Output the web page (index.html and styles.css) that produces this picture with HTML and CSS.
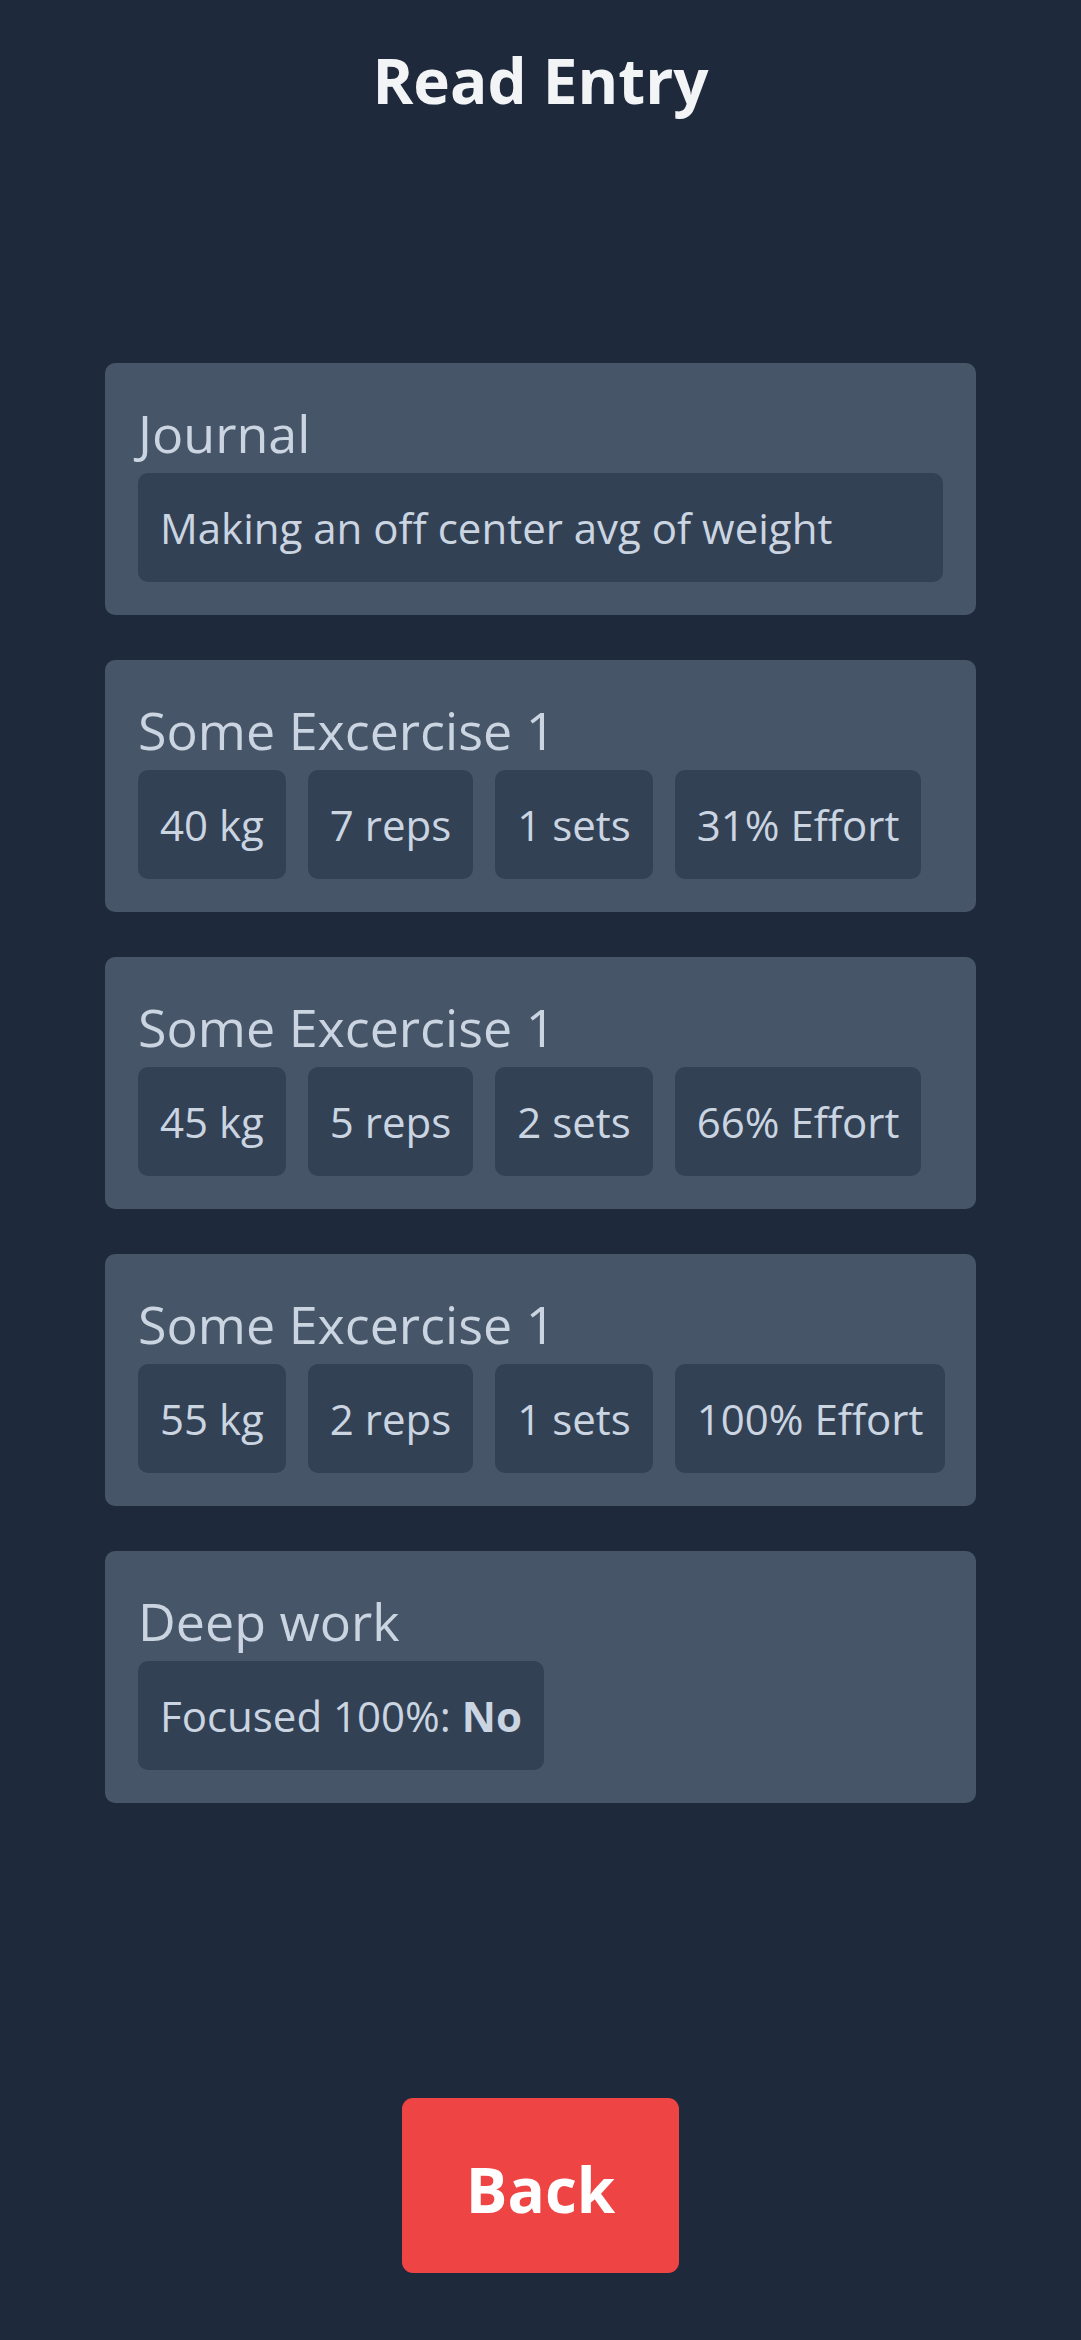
FILE: index.html
```html
<!DOCTYPE html>
<html lang="en">
<head>
<meta charset="utf-8">
<title>Read Entry</title>
<link rel="stylesheet" href="styles.css">
</head>
<body>
<div class="page">
  <h1 class="title">Read Entry</h1>
  <main class="entries">
    <section class="card">
      <div class="card-label">Journal</div>
      <div class="box">Making an off center avg of weight</div>
    </section>
    <section class="card">
      <div class="card-label">Some Excercise 1</div>
      <div class="chips">
        <span class="box">40 kg</span>
        <span class="box">7 reps</span>
        <span class="box">1 sets</span>
        <span class="box">31% Effort</span>
      </div>
    </section>
    <section class="card">
      <div class="card-label">Some Excercise 1</div>
      <div class="chips">
        <span class="box">45 kg</span>
        <span class="box">5 reps</span>
        <span class="box">2 sets</span>
        <span class="box">66% Effort</span>
      </div>
    </section>
    <section class="card">
      <div class="card-label">Some Excercise 1</div>
      <div class="chips">
        <span class="box">55 kg</span>
        <span class="box">2 reps</span>
        <span class="box">1 sets</span>
        <span class="box">100% Effort</span>
      </div>
    </section>
    <section class="card">
      <div class="card-label">Deep work</div>
      <div class="chips">
        <span class="box">Focused 100%: <strong>No</strong></span>
      </div>
    </section>
  </main>
  <button class="back" type="button">Back</button>
</div>
</body>
</html>
```
FILE: styles.css
```css
* { box-sizing: border-box; }
html, body { margin: 0; padding: 0; }
body {
  background: #1e293b;
  font-family: "Open Sans", "Noto Sans", sans-serif;
  color: #cbd5e1;
}
.page {
  min-height: 2340px;
  display: flex;
  flex-direction: column;
  align-items: center;
  padding-top: 38px;
}
.title {
  margin: 0;
  font-size: 62px;
  line-height: 84px;
  font-weight: 700;
  color: #f3f4f6;
}
.entries {
  margin-top: 241px;
  width: 871px;
  display: flex;
  flex-direction: column;
  gap: 45px;
}
.card {
  background: #475569;
  border-radius: 10px;
  padding: 33px 33px 33px;
}
.card-label {
  font-size: 52px;
  line-height: 74px;
  margin-bottom: 3px;
}
.box {
  background: #334155;
  border-radius: 10px;
  height: 109px;
  line-height: 109px;
  padding: 0 22px;
  font-size: 42px;
  white-space: nowrap;
}
.box strong { font-weight: 700; }
.chips {
  display: flex;
  gap: 22px;
}
.back {
  margin-top: auto;
  margin-bottom: 67px;
  background: #ef4444;
  color: #ffffff;
  border: none;
  border-radius: 11px;
  font-family: inherit;
  font-size: 62px;
  font-weight: 700;
  height: 175px;
  line-height: 167px;
  padding: 8px 64px 0;
}
```
